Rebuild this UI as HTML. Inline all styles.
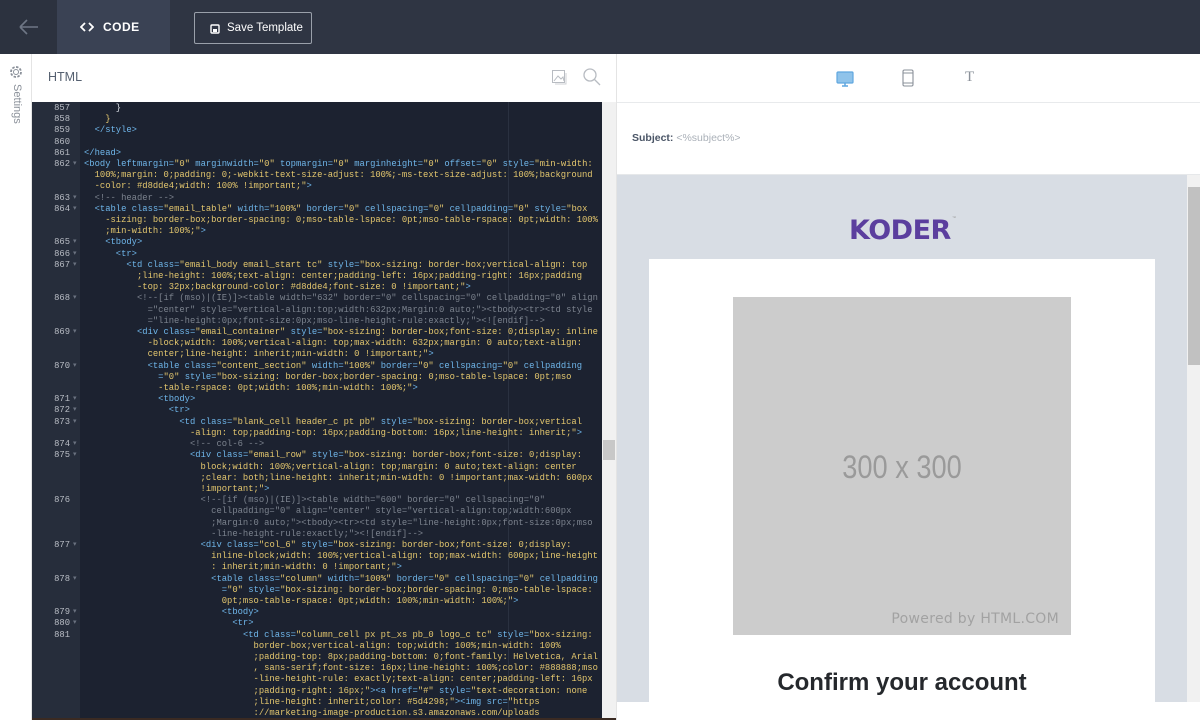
<!DOCTYPE html>
<html><head><meta charset="utf-8">
<style>
*{box-sizing:border-box;margin:0;padding:0}
body{width:1200px;height:720px;overflow:hidden;background:#fff;font-family:"Liberation Sans",sans-serif;position:relative}
.top{position:absolute;left:0;top:0;width:1200px;height:54px;background:#2f3543}
.back{position:absolute;left:0;top:0;width:57px;height:54px;background:#2c323f}
.tab{position:absolute;left:57px;top:0;width:113px;height:54px;background:#3a4254;color:#fff;font-weight:bold;font-size:12px;letter-spacing:.5px}
.save{position:absolute;left:194px;top:12px;width:118px;height:32px;border:1px solid #9aa0aa;border-radius:2px;color:#fff;font-size:11.5px}
.side{position:absolute;left:0;top:54px;width:32px;height:666px;background:#fff;border-right:1px solid #e4e4e4}
.hdr{position:absolute;left:32px;top:54px;width:584px;height:48px;background:#fff}
.ed{position:absolute;left:32px;top:102px;width:570px;height:616px;background:#1c2230;overflow:hidden}
.gut{position:absolute;left:0;top:0;width:48px;height:616px;background:#262d3b}
.code{position:absolute;left:0;top:1px;font-family:"Liberation Mono",monospace;font-size:8.83px;line-height:11.21px;color:#e4c76e}
.r{height:11.21px;position:relative;white-space:nowrap}
.n{position:absolute;left:0;top:0;width:38px;text-align:right;color:#b8bcc4}
.f{position:absolute;left:41px;top:0;color:#6b7280;font-size:7px}
.tx{position:absolute;left:52px;top:0;white-space:pre}
.t{color:#6fb6ea}.c{color:#7c838e}.w{color:#d8dce2}.y{color:#e4c76e}
.vs{position:absolute;left:602px;top:102px;width:14px;height:616px;background:#f1f1f1}
.rp{position:absolute;left:616px;top:54px;width:584px;height:666px;background:#fff;border-left:1px solid #e4e4e4}
.gray{position:absolute;left:0;top:121px;width:570px;height:527px;background:#d8dde4;overflow:hidden}
.card{position:absolute;left:32px;top:84px;width:506px;height:460px;background:#fff}
.ph{position:absolute;left:84px;top:38px;width:338px;height:338px;background:#cccccc}
</style></head><body>
<div class="top"></div>
<div class="back"><svg width="57" height="54"><path d="M20 27H38M20 27l7-7M20 27l7 7" stroke="#6e7685" stroke-width="1.6" fill="none"/></svg></div>
<div class="tab"><svg style="position:absolute;left:23px;top:21px" width="14" height="12"><path d="M5 2L1 6l4 4M9 2l4 4-4 4" stroke="#fff" stroke-width="1.8" fill="none"/></svg><span style="position:absolute;left:46px;top:20px">CODE</span></div>
<div class="save"><svg style="position:absolute;left:15px;top:11px" width="10" height="10"><rect x="1" y="1" width="8" height="8" rx="1" stroke="#fff" stroke-width="1.4" fill="none"/><rect x="3" y="5" width="4" height="3" fill="#fff"/></svg><span style="position:absolute;left:32px;top:9px">Save Template</span></div>
<div style="position:absolute;left:0;top:718px;width:1200px;height:2px;background:#3a2a22"></div>

<div class="side">
<svg style="position:absolute;left:9px;top:11px" width="14" height="14"><circle cx="7" cy="7" r="2.5" stroke="#8a9099" fill="none"/><circle cx="7" cy="7" r="5" stroke="#8a9099" stroke-dasharray="2.5 1.4" stroke-width="1.8" fill="none"/></svg>
<div style="position:absolute;top:30px;transform:rotate(90deg);transform-origin:left top;left:23px;font-size:11px;color:#8a9099;white-space:nowrap">Settings</div>
</div>
<div class="hdr">
<span style="position:absolute;left:16px;top:16px;font-size:12.5px;color:#556070">HTML</span>
<svg style="position:absolute;left:519px;top:15px" width="16" height="16"><rect x="1.5" y="1.5" width="12" height="12" stroke="#b8bcc2" fill="none"/><path d="M3 12l4-5 3 3 2-2 1 4" stroke="#b8bcc2" fill="none"/><path d="M15 4v11H4" stroke="#cfd2d6" fill="none"/></svg>
<svg style="position:absolute;left:550px;top:13px" width="20" height="20"><circle cx="8" cy="8" r="6" stroke="#b8bcc2" stroke-width="1.3" fill="none"/><path d="M12.5 12.5l5.5 5.5" stroke="#b8bcc2" stroke-width="1.3"/></svg>
</div>

<div class="ed">
<div class="gut"></div>
<div style="position:absolute;left:476px;top:0;width:1px;height:616px;background:#2a3140"></div>
<div class="code">
<div class="r"><span class="n">857</span><span class="tx w">      }</span></div>
<div class="r"><span class="n">858</span><span class="tx y">    }</span></div>
<div class="r"><span class="n">859</span><span class="tx t">  &lt;/style&gt;</span></div>
<div class="r"><span class="n">860</span></div>
<div class="r"><span class="n">861</span><span class="tx t">&lt;/head&gt;</span></div>
<div class="r"><span class="n">862</span><span class="f">▾</span><span class="tx"><span class="t">&lt;body leftmargin=</span>"0" <span class="t">marginwidth=</span>"0" <span class="t">topmargin=</span>"0" <span class="t">marginheight=</span>"0" <span class="t">offset=</span>"0" <span class="t">style=</span>"min-width:</span></div>
<div class="r"><span class="tx">  100%;margin: 0;padding: 0;-webkit-text-size-adjust: 100%;-ms-text-size-adjust: 100%;background</span></div>
<div class="r"><span class="tx">  -color: #d8dde4;width: 100% !important;"<span class="t">&gt;</span></span></div>
<div class="r"><span class="n">863</span><span class="f">▾</span><span class="tx c">  &lt;!-- header --&gt;</span></div>
<div class="r"><span class="n">864</span><span class="f">▾</span><span class="tx">  <span class="t">&lt;table class=</span>"email_table" <span class="t">width=</span>"100%" <span class="t">border=</span>"0" <span class="t">cellspacing=</span>"0" <span class="t">cellpadding=</span>"0" <span class="t">style=</span>"box</span></div>
<div class="r"><span class="tx">    -sizing: border-box;border-spacing: 0;mso-table-lspace: 0pt;mso-table-rspace: 0pt;width: 100%</span></div>
<div class="r"><span class="tx">    ;min-width: 100%;"<span class="t">&gt;</span></span></div>
<div class="r"><span class="n">865</span><span class="f">▾</span><span class="tx t">    &lt;tbody&gt;</span></div>
<div class="r"><span class="n">866</span><span class="f">▾</span><span class="tx t">      &lt;tr&gt;</span></div>
<div class="r"><span class="n">867</span><span class="f">▾</span><span class="tx">        <span class="t">&lt;td class=</span>"email_body email_start tc" <span class="t">style=</span>"box-sizing: border-box;vertical-align: top</span></div>
<div class="r"><span class="tx">          ;line-height: 100%;text-align: center;padding-left: 16px;padding-right: 16px;padding</span></div>
<div class="r"><span class="tx">          -top: 32px;background-color: #d8dde4;font-size: 0 !important;"<span class="t">&gt;</span></span></div>
<div class="r"><span class="n">868</span><span class="f">▾</span><span class="tx c">          &lt;!--[if (mso)|(IE)]&gt;&lt;table width="632" border="0" cellspacing="0" cellpadding="0" align</span></div>
<div class="r"><span class="tx c">            ="center" style="vertical-align:top;width:632px;Margin:0 auto;"&gt;&lt;tbody&gt;&lt;tr&gt;&lt;td style</span></div>
<div class="r"><span class="tx c">            ="line-height:0px;font-size:0px;mso-line-height-rule:exactly;"&gt;&lt;![endif]--&gt;</span></div>
<div class="r"><span class="n">869</span><span class="f">▾</span><span class="tx">          <span class="t">&lt;div class=</span>"email_container" <span class="t">style=</span>"box-sizing: border-box;font-size: 0;display: inline</span></div>
<div class="r"><span class="tx">            -block;width: 100%;vertical-align: top;max-width: 632px;margin: 0 auto;text-align:</span></div>
<div class="r"><span class="tx">            center;line-height: inherit;min-width: 0 !important;"<span class="t">&gt;</span></span></div>
<div class="r"><span class="n">870</span><span class="f">▾</span><span class="tx">            <span class="t">&lt;table class=</span>"content_section" <span class="t">width=</span>"100%" <span class="t">border=</span>"0" <span class="t">cellspacing=</span>"0" <span class="t">cellpadding</span></span></div>
<div class="r"><span class="tx">              <span class="t">=</span>"0" <span class="t">style=</span>"box-sizing: border-box;border-spacing: 0;mso-table-lspace: 0pt;mso</span></div>
<div class="r"><span class="tx">              -table-rspace: 0pt;width: 100%;min-width: 100%;"<span class="t">&gt;</span></span></div>
<div class="r"><span class="n">871</span><span class="f">▾</span><span class="tx t">              &lt;tbody&gt;</span></div>
<div class="r"><span class="n">872</span><span class="f">▾</span><span class="tx t">                &lt;tr&gt;</span></div>
<div class="r"><span class="n">873</span><span class="f">▾</span><span class="tx">                  <span class="t">&lt;td class=</span>"blank_cell header_c pt pb" <span class="t">style=</span>"box-sizing: border-box;vertical</span></div>
<div class="r"><span class="tx">                    -align: top;padding-top: 16px;padding-bottom: 16px;line-height: inherit;"<span class="t">&gt;</span></span></div>
<div class="r"><span class="n">874</span><span class="f">▾</span><span class="tx c">                    &lt;!-- col-6 --&gt;</span></div>
<div class="r"><span class="n">875</span><span class="f">▾</span><span class="tx">                    <span class="t">&lt;div class=</span>"email_row" <span class="t">style=</span>"box-sizing: border-box;font-size: 0;display:</span></div>
<div class="r"><span class="tx">                      block;width: 100%;vertical-align: top;margin: 0 auto;text-align: center</span></div>
<div class="r"><span class="tx">                      ;clear: both;line-height: inherit;min-width: 0 !important;max-width: 600px</span></div>
<div class="r"><span class="tx">                      !important;"<span class="t">&gt;</span></span></div>
<div class="r"><span class="n">876</span><span class="tx c">                      &lt;!--[if (mso)|(IE)]&gt;&lt;table width="600" border="0" cellspacing="0"</span></div>
<div class="r"><span class="tx c">                        cellpadding="0" align="center" style="vertical-align:top;width:600px</span></div>
<div class="r"><span class="tx c">                        ;Margin:0 auto;"&gt;&lt;tbody&gt;&lt;tr&gt;&lt;td style="line-height:0px;font-size:0px;mso</span></div>
<div class="r"><span class="tx c">                        -line-height-rule:exactly;"&gt;&lt;![endif]--&gt;</span></div>
<div class="r"><span class="n">877</span><span class="f">▾</span><span class="tx">                      <span class="t">&lt;div class=</span>"col_6" <span class="t">style=</span>"box-sizing: border-box;font-size: 0;display:</span></div>
<div class="r"><span class="tx">                        inline-block;width: 100%;vertical-align: top;max-width: 600px;line-height</span></div>
<div class="r"><span class="tx">                        : inherit;min-width: 0 !important;"<span class="t">&gt;</span></span></div>
<div class="r"><span class="n">878</span><span class="f">▾</span><span class="tx">                        <span class="t">&lt;table class=</span>"column" <span class="t">width=</span>"100%" <span class="t">border=</span>"0" <span class="t">cellspacing=</span>"0" <span class="t">cellpadding</span></span></div>
<div class="r"><span class="tx">                          <span class="t">=</span>"0" <span class="t">style=</span>"box-sizing: border-box;border-spacing: 0;mso-table-lspace:</span></div>
<div class="r"><span class="tx">                          0pt;mso-table-rspace: 0pt;width: 100%;min-width: 100%;"<span class="t">&gt;</span></span></div>
<div class="r"><span class="n">879</span><span class="f">▾</span><span class="tx t">                          &lt;tbody&gt;</span></div>
<div class="r"><span class="n">880</span><span class="f">▾</span><span class="tx t">                            &lt;tr&gt;</span></div>
<div class="r"><span class="n">881</span><span class="tx">                              <span class="t">&lt;td class=</span>"column_cell px pt_xs pb_0 logo_c tc" <span class="t">style=</span>"box-sizing:</span></div>
<div class="r"><span class="tx">                                border-box;vertical-align: top;width: 100%;min-width: 100%</span></div>
<div class="r"><span class="tx">                                ;padding-top: 8px;padding-bottom: 0;font-family: Helvetica, Arial</span></div>
<div class="r"><span class="tx">                                , sans-serif;font-size: 16px;line-height: 100%;color: #888888;mso</span></div>
<div class="r"><span class="tx">                                -line-height-rule: exactly;text-align: center;padding-left: 16px</span></div>
<div class="r"><span class="tx">                                ;padding-right: 16px;"<span class="t">&gt;&lt;a href=</span>"#" <span class="t">style=</span>"text-decoration: none</span></div>
<div class="r"><span class="tx">                                ;line-height: inherit;color: #5d4298;"<span class="t">&gt;&lt;img src=</span>"https</span></div>
<div class="r"><span class="tx">                                ://marketing-image-production.s3.amazonaws.com/uploads</span></div>
</div>
</div>
<div class="vs"><div style="position:absolute;left:1px;top:338px;width:12px;height:20px;background:#c8c8c8"></div></div>

<div class="rp">
<svg style="position:absolute;left:219px;top:17px" width="18" height="16"><rect x="1" y="1" width="16" height="11" rx="1" fill="#8fc3ea" stroke="#5fa6df" stroke-width="1.2"/><path d="M6 15h6M9 12v3" stroke="#5fa6df" stroke-width="1.5"/></svg>
<svg style="position:absolute;left:285px;top:15px" width="12" height="18"><rect x="1" y="1" width="10" height="16" rx="1.5" stroke="#8a9099" stroke-width="1.1" fill="none"/><path d="M1 4h10M1 14h10" stroke="#8a9099"/></svg>
<span style="position:absolute;left:348px;top:15px;font-family:'Liberation Serif',serif;font-size:15px;color:#8a9099">T</span>
<div style="position:absolute;left:0;top:48px;width:584px;height:1px;background:#e8eaec"></div>
<div style="position:absolute;left:15px;top:78px;font-size:10.5px;color:#aab0b8"><b style="color:#4a5566">Subject:</b> &lt;%subject%&gt;</div>
<div style="position:absolute;left:0;top:120px;width:584px;height:1px;background:#e6e8ea"></div>
<div class="gray">
<div style="position:absolute;left:232px;top:40px;font-size:27px;font-weight:bold;color:#5b3e9e;letter-spacing:-0.5px;font-family:'DejaVu Sans',sans-serif">KODER</div>
<span style="position:absolute;left:335px;top:40px;font-size:4px;color:#999">™</span>
<div class="card"><div class="ph">
<div style="position:absolute;left:0;top:152px;width:338px;text-align:center;font-size:32px;color:#9a9a9a;transform:scaleX(.85)">300 x 300</div>
<div style="position:absolute;right:12px;bottom:8px;font-size:14px;color:#a2a2a2;font-family:'DejaVu Sans',sans-serif;letter-spacing:.3px">Powered by HTML.COM</div>
</div>
<div style="position:absolute;left:0;top:410px;width:506px;text-align:center;font-size:24px;font-weight:bold;color:#25282c">Confirm your account</div>
</div>
</div>
<div style="position:absolute;left:570px;top:121px;width:14px;height:527px;background:#f1f1f1"><div style="position:absolute;left:1px;top:12px;width:12px;height:178px;background:#c1c1c1"></div></div>
</div>
</body></html>
